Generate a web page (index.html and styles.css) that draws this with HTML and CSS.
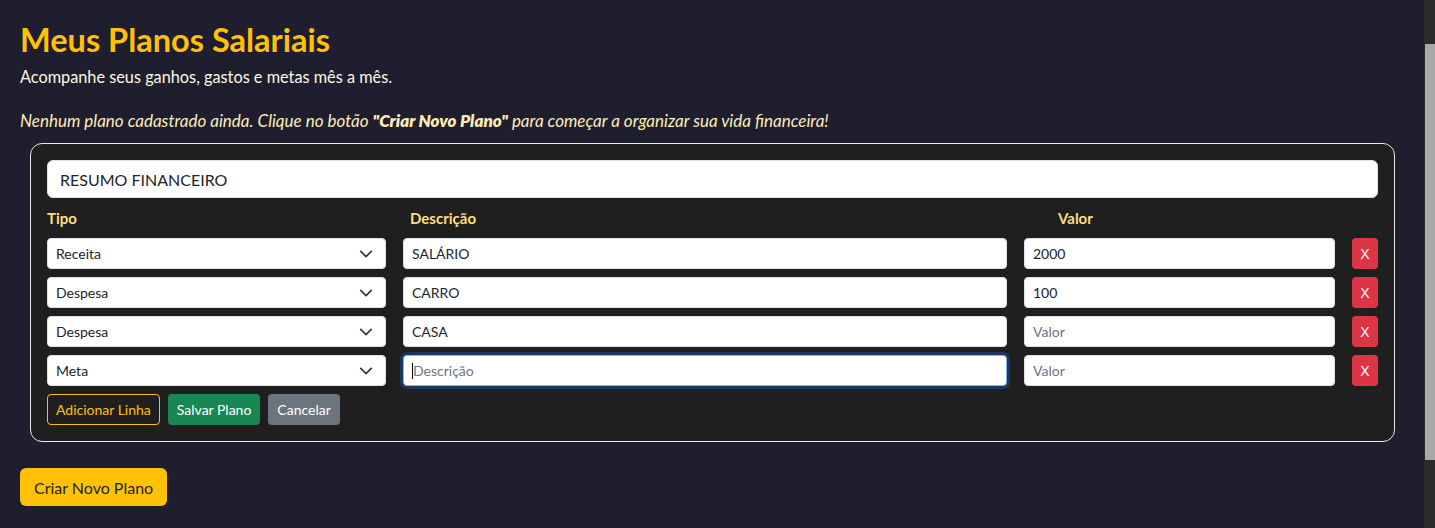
FILE: index.html
```html
<!DOCTYPE html>
<html lang="pt-BR">
<head>
<meta charset="utf-8">
<title>Meus Planos Salariais</title>
<link rel="stylesheet" href="styles.css">
</head>
<body>
<main class="page">
  <h2 class="title">Meus Planos Salariais</h2>
  <p class="subtitle">Acompanhe seus ganhos, gastos e metas mês a mês.</p>
  <p class="empty">Nenhum plano cadastrado ainda. Clique no botão <strong>"Criar Novo Plano"</strong> para começar a organizar sua vida financeira!</p>

  <section class="card">
    <input class="title-input" type="text" value="RESUMO FINANCEIRO">
    <div class="head-row">
      <span class="lbl lbl-tipo">Tipo</span>
      <span class="lbl lbl-desc">Descrição</span>
      <span class="lbl lbl-valor">Valor</span>
    </div>
    <div class="rows">
      <div class="row">
        <div class="select"><span>Receita</span><svg class="chev" viewBox="0 0 16 16" width="16" height="16"><path d="M2 5l6 6 6-6" fill="none" stroke="#343a40" stroke-width="2" stroke-linecap="round" stroke-linejoin="round"/></svg></div>
        <div class="field">SALÁRIO</div>
        <div class="field">2000</div>
        <button class="btn-x">X</button>
      </div>
      <div class="row">
        <div class="select"><span>Despesa</span><svg class="chev" viewBox="0 0 16 16" width="16" height="16"><path d="M2 5l6 6 6-6" fill="none" stroke="#343a40" stroke-width="2" stroke-linecap="round" stroke-linejoin="round"/></svg></div>
        <div class="field">CARRO</div>
        <div class="field">100</div>
        <button class="btn-x">X</button>
      </div>
      <div class="row">
        <div class="select"><span>Despesa</span><svg class="chev" viewBox="0 0 16 16" width="16" height="16"><path d="M2 5l6 6 6-6" fill="none" stroke="#343a40" stroke-width="2" stroke-linecap="round" stroke-linejoin="round"/></svg></div>
        <div class="field">CASA</div>
        <div class="field placeholder">Valor</div>
        <button class="btn-x">X</button>
      </div>
      <div class="row">
        <div class="select"><span>Meta</span><svg class="chev" viewBox="0 0 16 16" width="16" height="16"><path d="M2 5l6 6 6-6" fill="none" stroke="#343a40" stroke-width="2" stroke-linecap="round" stroke-linejoin="round"/></svg></div>
        <div class="field placeholder focused"><span class="caret"></span>Descrição</div>
        <div class="field placeholder">Valor</div>
        <button class="btn-x">X</button>
      </div>
    </div>
    <div class="actions">
      <button class="btn btn-outline">Adicionar Linha</button>
      <button class="btn btn-green">Salvar Plano</button>
      <button class="btn btn-grey">Cancelar</button>
    </div>
  </section>

  <button class="btn-new">Criar Novo Plano</button>
</main>
<div class="scrollbar"><div class="thumb"></div></div>
</body>
</html>
```

FILE: styles.css
```css
html {
  background: #1e1e2f;
}
body {
  margin: 0 11px 0 0;
  background: #1e1e2f;
  font-family: "Lato", "Open Sans", sans-serif;
  color: #fff3cd;
}
.scrollbar {
  position: fixed;
  top: 0;
  right: 0;
  width: 11px;
  height: 100vh;
  background: #2b2b2b;
}
.thumb {
  margin-top: 44px;
  height: 416px;
  margin-left: 1px;
  background: #a8a8a8;
}
.page {
  padding: 21px 20px 160px 20px;
}
.title {
  margin: 0 0 6px 0;
  font-size: 32.5px;
  line-height: 38px;
  font-weight: 700;
  color: #ffc107;
}
.subtitle {
  margin: 0 0 20px 0;
  font-size: 16.3px;
  line-height: 24px;
  color: #fff8e1;
}
.empty {
  margin: 0 0 10px 0;
  font-size: 17px;
  line-height: 24px;
  font-style: italic;
  color: #ffecb5;
}
.empty strong {
  font-weight: 800;
}
.card {
  margin: 0 9px 26px 10px;
  border: 1px solid #e8e8e8;
  border-radius: 12px;
  background: #1f1f1f;
  padding: 16px;
}
.title-input {
  display: block;
  box-sizing: border-box;
  width: 100%;
  height: 38px;
  border: 1px solid #dee2e6;
  border-radius: 6px;
  padding: 0 12px;
  font-family: inherit;
  font-size: 16px;
  color: #212529;
  background: #fff;
  outline: none;
}
.head-row {
  display: flex;
  height: 40px;
  align-items: center;
  font-size: 15px;
  font-weight: 700;
  color: #ffdd80;
}
.lbl-tipo { width: 363px; }
.lbl-desc { width: 648px; }
.rows {
  display: flex;
  flex-direction: column;
  gap: 8px;
}
.row {
  display: grid;
  grid-template-columns: 339px 1fr 311px 26px;
  gap: 17px;
  height: 31px;
}
.select, .field {
  box-sizing: border-box;
  height: 31px;
  background: #fff;
  border: 1px solid #dee2e6;
  border-radius: 4px;
  display: flex;
  align-items: center;
  padding: 0 8px;
  font-size: 14px;
  color: #212529;
}
.select {
  justify-content: space-between;
  padding-right: 12px;
}
.chev {
  width: 14px;
  height: 14px;
}
.placeholder {
  color: #6c757d;
}
.focused {
  border-color: #86b7fe;
  box-shadow: 0 0 0 3px rgba(13, 110, 253, 0.3);
}
.caret {
  display: inline-block;
  width: 1px;
  height: 16px;
  background: #000;
}
.btn-x {
  height: 31px;
  border: none;
  border-radius: 4px;
  background: #dc3545;
  color: #fff;
  font-family: "Liberation Sans", sans-serif;
  font-size: 14px;
  padding: 0;
}
.actions {
  display: flex;
  gap: 8px;
  margin-top: 8px;
}
.btn {
  height: 31px;
  border-radius: 4px;
  padding: 0 8px;
  font-family: inherit;
  font-size: 14px;
  border: 1px solid transparent;
}
.btn-outline {
  border-color: #ffc107;
  background: transparent;
  color: #ffc107;
}
.btn-green {
  background: #198754;
  color: #fff;
}
.btn-grey {
  background: #6c757d;
  color: #fff;
}
.btn-new {
  height: 38px;
  padding: 0 14px;
  border: none;
  border-radius: 6px;
  background: #ffc107;
  color: #212529;
  font-family: inherit;
  font-size: 16px;
}
```
